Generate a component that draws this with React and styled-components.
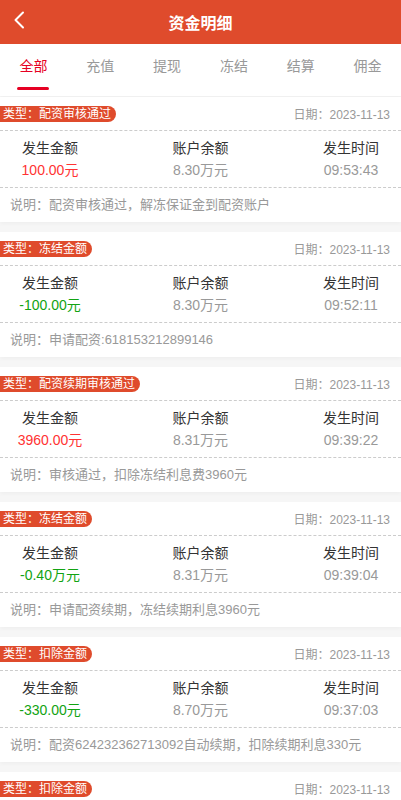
import React from "react";
import styled, { createGlobalStyle } from "styled-components";

const GlobalStyle = createGlobalStyle`
    body {
        margin: 0;
        background: #f6f6f6;
        font-family: "Liberation Sans", "Noto Sans CJK SC", sans-serif;
    }
`;

const Page = styled.div`
    width: 401px;
    min-height: 800px;
    background: #f6f6f6;
`;

const Header = styled.header`
    height: 44px;
    background: #df4b2c;
    display: flex;
    align-items: center;
    justify-content: center;
    position: relative;
`;

const BackButton = styled.span`
    position: absolute;
    left: 12px;
    top: 10px;
    width: 16px;
    height: 20px;
    display: flex;
`;

const Title = styled.h1`
    margin: 0;
    color: #fff;
    font-size: 16px;
    font-weight: bold;
`;

const Tabs = styled.nav`
    height: 52px;
    background: #fff;
    display: grid;
    grid-template-columns: repeat(6, 1fr);
    box-shadow: 0 1px 3px rgba(0, 0, 0, 0.04);
    margin-bottom: 1px;
`;

const Tab = styled.div`
    position: relative;
    display: flex;
    justify-content: center;
    padding-top: 13px;
    font-size: 14px;
    line-height: 18px;
    color: ${(p) => (p.$active ? "#e60023" : "#999")};

    &::after {
        content: "";
        display: ${(p) => (p.$active ? "block" : "none")};
        position: absolute;
        top: 43px;
        left: 50%;
        width: 32px;
        height: 3px;
        margin-left: -16px;
        border-radius: 2px;
        background: #e60023;
    }
`;

const List = styled.div`
    display: flex;
    flex-direction: column;
    gap: 10px;
`;

const Card = styled.section`
    background: #fff;
    box-shadow: 0 2px 4px rgba(0, 0, 0, 0.03);
`;

const CardHead = styled.div`
    height: 33px;
    display: flex;
    align-items: center;
    justify-content: space-between;
    padding-right: 11px;
    border-bottom: 1px dashed #ccc;
`;

const Badge = styled.span`
    height: 16px;
    line-height: 16px;
    padding: 0 5px 0 3px;
    background: #df4b2c;
    color: #fff;
    font-size: 12px;
    border-radius: 0 8px 8px 0;
`;

const DateText = styled.span`
    font-size: 12px;
    color: #999;
`;

const Stats = styled.div`
    display: grid;
    grid-template-columns: repeat(3, 100px);
    justify-content: space-between;
    padding: 6px 0;
    border-bottom: 1px dashed #ccc;
`;

const Stat = styled.div`
    display: flex;
    flex-direction: column;
    align-items: center;
    font-size: 14px;
    line-height: 22px;
`;

const Label = styled.span`
    color: #333;
`;

const Value = styled.span`
    color: ${(p) => p.$color};
`;

const Note = styled.div`
    height: 34px;
    line-height: 33px;
    padding-left: 10px;
    font-size: 13px;
    color: #999;
`;

const tabs = ["全部", "充值", "提现", "冻结", "结算", "佣金"];

const records = [
    { type: "配资审核通过", amount: "100.00元", balance: "8.30万元", time: "09:53:43", note: "配资审核通过，解冻保证金到配资账户" },
    { type: "冻结金额", amount: "-100.00元", balance: "8.30万元", time: "09:52:11", note: "申请配资:618153212899146" },
    { type: "配资续期审核通过", amount: "3960.00元", balance: "8.31万元", time: "09:39:22", note: "审核通过，扣除冻结利息费3960元" },
    { type: "冻结金额", amount: "-0.40万元", balance: "8.31万元", time: "09:39:04", note: "申请配资续期，冻结续期利息3960元" },
    { type: "扣除金额", amount: "-330.00元", balance: "8.70万元", time: "09:37:03", note: "配资624232362713092自动续期，扣除续期利息330元" },
    { type: "扣除金额", amount: "-330.00元", balance: "9.03万元", time: "09:36:40", note: "配资624232362713092自动续期，扣除续期利息330元" },
];

function BackIcon() {
    return (
        <svg width="16" height="20" viewBox="0 0 16 20" fill="none">
            <path d="M11 2.5L3.5 10L11 17.5" stroke="#fff" strokeWidth="2" strokeLinecap="round" strokeLinejoin="round" />
        </svg>
    );
}

export default function App() {
    return (
        <Page>
            <GlobalStyle />
            <Header>
                <BackButton>
                    <BackIcon />
                </BackButton>
                <Title>资金明细</Title>
            </Header>
            <Tabs>
                {tabs.map((t, i) => (
                    <Tab key={t} $active={i === 0}>
                        {t}
                    </Tab>
                ))}
            </Tabs>
            <List>
                {records.map((r, i) => (
                    <Card key={i}>
                        <CardHead>
                            <Badge>类型：{r.type}</Badge>
                            <DateText>日期：2023-11-13</DateText>
                        </CardHead>
                        <Stats>
                            <Stat>
                                <Label>发生金额</Label>
                                <Value $color={r.amount.startsWith("-") ? "#12a312" : "#ff3333"}>{r.amount}</Value>
                            </Stat>
                            <Stat>
                                <Label>账户余额</Label>
                                <Value $color="#999">{r.balance}</Value>
                            </Stat>
                            <Stat>
                                <Label>发生时间</Label>
                                <Value $color="#999">{r.time}</Value>
                            </Stat>
                        </Stats>
                        <Note>说明：{r.note}</Note>
                    </Card>
                ))}
            </List>
        </Page>
    );
}
